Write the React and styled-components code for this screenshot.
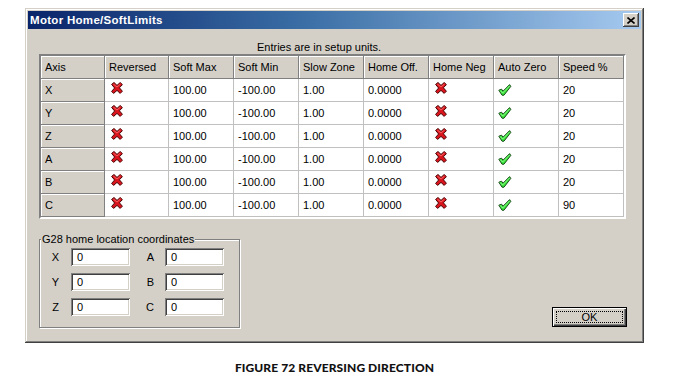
import React from "react";
import styled, { createGlobalStyle } from "styled-components";

const Global = createGlobalStyle`
  html, body { margin: 0; padding: 0; background: #ffffff; }
  body { font-family: "Liberation Sans", Arial, sans-serif; font-size: 11px; color: #000; }
  * { box-sizing: border-box; }
`;

const Page = styled.div`
  width: 679px;
  height: 378px;
  padding: 8px 0 0 25px;
`;

const Dialog = styled.div`
  width: 619px;
  height: 335px;
  background: #d4d0c8;
  padding: 3px;
  display: flex;
  flex-direction: column;
  box-shadow: inset -1px -1px 0 #404040, inset 1px 1px 0 #d4d0c8,
    inset -2px -2px 0 #808080, inset 2px 2px 0 #ffffff;
`;

const TitleBar = styled.div`
  height: 18px;
  display: flex;
  align-items: center;
  justify-content: space-between;
  padding: 0 2px 0 2px;
  background: linear-gradient(to right, #0a246a 0%, #3a6ea5 45%, #a6caf0 100%);
`;

const Title = styled.span`
  color: #ffffff;
  font-weight: bold;
  font-size: 11.5px;
  letter-spacing: 0.3px;
`;

const CloseButton = styled.div`
  width: 16px;
  height: 14px;
  background: #d4d0c8;
  display: flex;
  align-items: center;
  justify-content: center;
  box-shadow: inset -1px -1px 0 #404040, inset 1px 1px 0 #ffffff,
    inset -2px -2px 0 #808080;
`;

const Body = styled.div`
  flex: 1;
  display: flex;
  flex-direction: column;
  padding: 0 14px 12px 11px;
`;

const Note = styled.div`
  margin-top: 12px;
  height: 13px;
  line-height: 13px;
  padding-left: 218px;
`;

const Table = styled.div`
  display: grid;
  grid-template-columns: 64px 64px 65px 65px 65px 65px 65px 65px 65px;
  width: 587px;
  border-style: solid;
  border-width: 2px;
  border-color: #808080 #ffffff #ffffff #808080;
  box-shadow: inset 1px 1px 0 #404040;
  background: #ffffff;
`;

const Cell = styled.div`
  height: 23px;
  display: flex;
  align-items: ${(p) => (p.$icon ? "flex-start" : "center")};
  padding-left: ${(p) => (p.$icon ? p.$icon : 4)}px;
  background: ${(p) => (p.$head ? "#d4d0c8" : "#ffffff")};
  border-right: 1px solid ${(p) => (p.$head ? "#808080" : "#c0c0c0")};
  border-bottom: 1px solid ${(p) => (p.$head ? "#808080" : "#c0c0c0")};
  box-shadow: ${(p) => (p.$head ? "inset 1px 1px 0 #ffffff" : "none")};
  white-space: nowrap;
`;

const IconWrap = styled.span`
  display: block;
  margin-top: ${(p) => p.$top}px;
`;

const Bottom = styled.div`
  margin-top: auto;
  display: flex;
  align-items: flex-end;
  justify-content: space-between;
`;

const Group = styled.fieldset`
  margin: 0;
  width: 201px;
  height: 95px;
  padding: 3px 0 0 0;
  border: 1px solid #808080;
  box-shadow: 1px 1px 0 #ffffff, inset 1px 1px 0 #ffffff;
`;

const Legend = styled.legend`
  padding: 0 1px;
  margin-left: 1px;
  background: #d4d0c8;
  font-size: 11px;
`;

const CoordGrid = styled.div`
  display: grid;
  grid-template-columns: 31px 59px 35px 59px;
  row-gap: 7px;
  align-items: center;
`;

const CoordLabel = styled.span`
  text-align: right;
  padding-right: ${(p) => p.$pad}px;
`;

const Field = styled.div`
  height: 18px;
  background: #ffffff;
  display: flex;
  align-items: center;
  padding-left: 6px;
  box-shadow: inset 1px 1px 0 #808080, inset -1px -1px 0 #ffffff,
    inset 2px 2px 0 #404040, inset -2px -2px 0 #d4d0c8;
`;

const OkButton = styled.div`
  position: relative;
  width: 75px;
  height: 20px;
  margin-bottom: 1px;
  border: 1px solid #000000;
  background: #d4d0c8;
  display: flex;
  align-items: center;
  justify-content: center;
  box-shadow: inset 1px 1px 0 #ffffff, inset -1px -1px 0 #404040,
    inset -2px -2px 0 #808080;
  &::after {
    content: "";
    position: absolute;
    inset: 3px;
    border: 1px dotted #000000;
  }
`;

const Caption = styled.div`
  width: 619px;
  margin-top: 17px;
  text-align: center;
  font-family: Lato, "Open Sans", sans-serif;
  font-weight: 900;
  font-size: 12px;
  letter-spacing: 0.1px;
  color: #111;
`;

const CrossIcon = () => (
  <svg width="12" height="12" viewBox="0 0 12 12">
    <polygon
      points="0.6,2.4 3,0.5 6,3.4 9.2,0.5 11.4,2.6 8.4,5.8 11.4,9.2 9.2,11.4 6,8.4 2.6,11.4 0.6,9.4 3.6,6"
      fill="#d9141c"
      stroke="#4a0606"
      strokeWidth="1"
      strokeLinejoin="round"
    />
    <polyline points="2.4,2.2 6,5 9.4,2.2" fill="none" stroke="#ff6a6a" strokeWidth="0.9" />
  </svg>
);

const CheckIcon = () => (
  <svg width="14" height="12" viewBox="0 0 14 12">
    <polygon
      points="0.8,6.2 3.6,5.2 5,7.2 11.6,0.6 12.8,2.4 6,11.2 4,11.2"
      fill="#3ee63e"
      stroke="#0b3a0b"
      strokeWidth="0.9"
      strokeLinejoin="round"
    />
    <polyline points="2,6.4 4.6,9 11.6,2" fill="none" stroke="#a8ffa8" strokeWidth="0.7" />
  </svg>
);

const headers = ["Axis", "Reversed", "Soft Max", "Soft Min", "Slow Zone", "Home Off.", "Home Neg", "Auto Zero", "Speed %"];
const rows = [
  ["X", "20"],
  ["Y", "20"],
  ["Z", "20"],
  ["A", "20"],
  ["B", "20"],
  ["C", "90"],
];

const coords = [
  ["X", "A"],
  ["Y", "B"],
  ["Z", "C"],
];

export default function App() {
  return (
    <>
      <Global />
      <Page>
        <Dialog>
          <TitleBar>
            <Title>Motor Home/SoftLimits</Title>
            <CloseButton>
              <svg width="8" height="7" viewBox="0 0 8 7">
                <path d="M0.5 0.5 L7.5 6.5 M7.5 0.5 L0.5 6.5" stroke="#000" strokeWidth="1.6" />
              </svg>
            </CloseButton>
          </TitleBar>
          <Body>
            <Note>Entries are in setup units.</Note>
            <Table>
              {headers.map((h) => (
                <Cell key={h} $head>
                  {h}
                </Cell>
              ))}
              {rows.map(([axis, speed]) => (
                <React.Fragment key={axis}>
                  <Cell $head>{axis}</Cell>
                  <Cell $icon={6}>
                    <IconWrap $top={3}>
                      <CrossIcon />
                    </IconWrap>
                  </Cell>
                  <Cell>100.00</Cell>
                  <Cell>-100.00</Cell>
                  <Cell>1.00</Cell>
                  <Cell>0.0000</Cell>
                  <Cell $icon={6}>
                    <IconWrap $top={3}>
                      <CrossIcon />
                    </IconWrap>
                  </Cell>
                  <Cell $icon={4}>
                    <IconWrap $top={5}>
                      <CheckIcon />
                    </IconWrap>
                  </Cell>
                  <Cell>{speed}</Cell>
                </React.Fragment>
              ))}
            </Table>
            <Bottom>
              <Group>
                <Legend>G28 home location coordinates</Legend>
                <CoordGrid>
                  {coords.map(([a, b]) => (
                    <React.Fragment key={a}>
                      <CoordLabel $pad={12}>{a}</CoordLabel>
                      <Field>0</Field>
                      <CoordLabel $pad={11}>{b}</CoordLabel>
                      <Field>0</Field>
                    </React.Fragment>
                  ))}
                </CoordGrid>
              </Group>
              <OkButton>OK</OkButton>
            </Bottom>
          </Body>
        </Dialog>
        <Caption>FIGURE 72 REVERSING DIRECTION</Caption>
      </Page>
    </>
  );
}
